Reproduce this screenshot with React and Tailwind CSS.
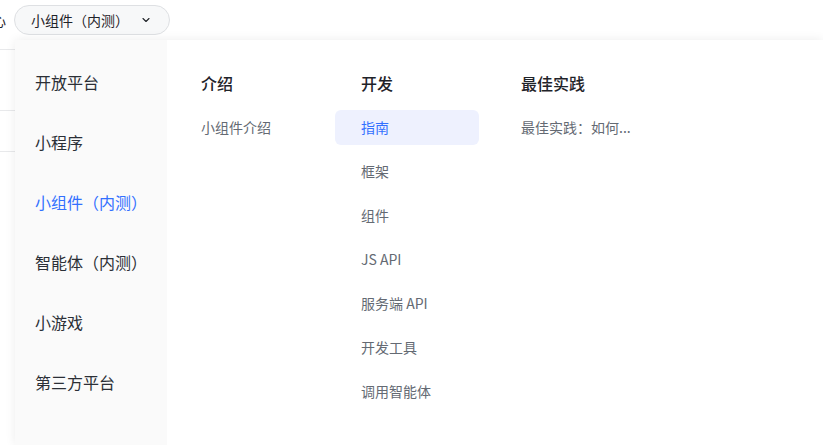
import React, { useState } from 'react';

const platforms = ['开放平台', '小程序', '小组件（内测）', '智能体（内测）', '小游戏', '第三方平台'];

const columns = [
    { title: '介绍', items: ['小组件介绍'] },
    { title: '开发', items: ['指南', '框架', '组件', 'JS API', '服务端 API', '开发工具', '调用智能体'] },
    { title: '最佳实践', items: ['最佳实践：如何...'] },
];

const App = () => {
    const [activePlatform, setActivePlatform] = useState('小组件（内测）');
    const [activeItem, setActiveItem] = useState('指南');

    return (
        <div className="relative w-[823px] h-[445px] overflow-hidden bg-white font-['Noto_Sans_CJK_SC','Noto_Sans',sans-serif]">
            {/* Top bar */}
            <div className="flex items-center h-10">
                <span className="-ml-[8px] text-[14px] text-[#1f2329]">心</span>
                <button className="ml-[8px] flex items-center gap-[11px] h-[30px] pl-[16px] pr-[17px] rounded-full border border-[#dee0e3] bg-[#f7f8f9] text-[14px] text-[#1f2329]">
                    <span>小组件（内测）</span>
                    <svg xmlns="http://www.w3.org/2000/svg" width="12" height="12" viewBox="0 0 24 24" fill="none" stroke="#1f2329" strokeWidth="2.2" strokeLinecap="round" strokeLinejoin="round">
                        <polyline points="6 9 12 15 18 9"></polyline>
                    </svg>
                </button>
            </div>

            {/* Page content behind the menu */}
            <div className="flex flex-col">
                <div className="h-[10px] border-b border-[#e8e9eb]"></div>
                <div className="h-[61px] border-b border-[#e8e9eb]"></div>
                <div className="h-[41px] border-b border-[#e8e9eb]"></div>
            </div>

            {/* Dropdown menu */}
            <div className="absolute left-[15px] top-10 right-0 bottom-0 flex bg-white shadow-[0_0_10px_rgba(0,0,0,0.08)]">
                <div className="w-[152px] shrink-0 bg-[#fafafa] pt-[12px]">
                    {platforms.map(p => (
                        <div
                            key={p}
                            className={`h-[60px] flex items-center pl-[20px] text-[16px] font-normal cursor-pointer ${activePlatform === p ? 'text-[#3370ff]' : 'text-[#2b2f36]'}`}
                            onClick={() => setActivePlatform(p)}
                        >
                            {p}
                        </div>
                    ))}
                </div>
                <div className="flex gap-4 pl-2 pt-[31px]">
                    {columns.map(col => (
                        <div key={col.title} className="w-[144px] flex flex-col">
                            <div className="h-[24px] flex items-center px-[26px] text-[16px] font-medium text-[#1f2329]">
                                {col.title}
                            </div>
                            <div className="flex flex-col gap-[9px] mt-[15px]">
                                {col.items.map(item => (
                                    <div
                                        key={item}
                                        className={`h-[35px] flex items-center px-[26px] rounded-md text-[14px] whitespace-nowrap cursor-pointer ${activeItem === item ? 'bg-[#eef1fe] text-[#3370ff]' : 'text-[#646a73]'}`}
                                        onClick={() => setActiveItem(item)}
                                    >
                                        {item}
                                    </div>
                                ))}
                            </div>
                        </div>
                    ))}
                </div>
            </div>
        </div>
    );
};

export default App;
